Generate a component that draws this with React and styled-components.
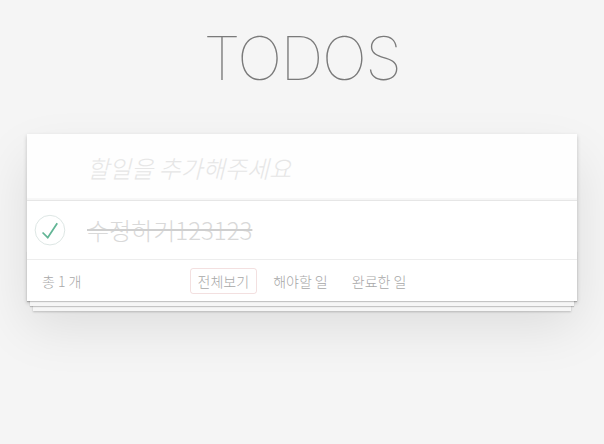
import styled, { createGlobalStyle } from "styled-components";

const GlobalStyle = createGlobalStyle`
  html, body {
    margin: 0;
    padding: 0;
    min-height: 100%;
  }
  body {
    background: #f5f5f5;
    font-family: "Noto Sans CJK KR", "Liberation Sans", sans-serif;
    font-weight: 300;
    color: #4d4d4d;
    -webkit-font-smoothing: antialiased;
  }
`;

const Page = styled.div`
  width: 550px;
  min-height: 444px;
  box-sizing: border-box;
  margin: 0 auto;
  padding-top: 20px;
`;

const Title = styled.h1`
  margin: 0 0 38px;
  text-align: center;
  font-family: "Inter", "Liberation Sans", sans-serif;
  font-weight: 100;
  font-size: 60px;
  line-height: 76px;
  color: #7a7a7a;
  letter-spacing: -1.5px;
`;

const Card = styled.section`
  background: #fff;
  position: relative;
  box-shadow: 0 2px 4px 0 rgba(0, 0, 0, 0.2), 0 25px 50px 0 rgba(0, 0, 0, 0.1);
`;

const NewTodo = styled.input`
  display: block;
  box-sizing: border-box;
  width: 100%;
  height: 66px;
  margin: 0;
  padding: 16px 16px 16px 60px;
  border: none;
  outline: none;
  background: rgba(0, 0, 0, 0.003);
  box-shadow: inset 0 -2px 1px rgba(0, 0, 0, 0.03);
  font-family: "Noto Sans CJK KR", "Liberation Sans", sans-serif;
  font-size: 24px;
  font-weight: 300;
  color: #4d4d4d;

  &::placeholder {
    font-style: italic;
    color: #e6e6e6;
  }
`;

const List = styled.ul`
  margin: 0;
  padding: 0;
  list-style: none;
  border-top: 1px solid #e6e6e6;
`;

const Item = styled.li`
  display: flex;
  align-items: center;
  height: 58px;
  border-bottom: 1px solid #ededed;
`;

const Toggle = styled.span`
  width: 40px;
  height: 40px;
  flex: 0 0 40px;
  display: flex;
`;

const Label = styled.label`
  padding-left: 20px;
  font-size: 24px;
  line-height: 1.2;
  color: ${(p) => (p.$done ? "#d9d9d9" : "#4d4d4d")};
  text-decoration: ${(p) => (p.$done ? "line-through" : "none")};
  text-decoration-color: #cfcfcf;
`;

const Footer = styled.footer`
  position: relative;
  display: grid;
  grid-template-columns: 1fr auto 1fr;
  align-items: center;
  height: 41px;
  padding: 0 15px;
  font-size: 14px;
  color: #a8a8a8;

  &::before {
    content: "";
    position: absolute;
    left: 0;
    right: 0;
    bottom: 0;
    height: 50px;
    pointer-events: none;
    box-shadow: 0 1px 1px rgba(0, 0, 0, 0.2), 0 8px 0 -3px #f6f6f6,
      0 9px 1px -3px rgba(0, 0, 0, 0.2), 0 16px 0 -6px #f6f6f6,
      0 17px 2px -6px rgba(0, 0, 0, 0.2);
  }
`;

const Count = styled.span`
  position: relative;
`;

const Filters = styled.ul`
  position: relative;
  display: flex;
  margin: 0;
  padding: 0;
  list-style: none;
`;

const Filter = styled.li`
  margin: 0 4px;
  padding: 2px 7px;
  border: 1px solid ${(p) => (p.$selected ? "rgba(175, 47, 47, 0.15)" : "transparent")};
  border-radius: 3px;
  color: #a8a8a8;
  cursor: pointer;
`;

const CheckIcon = () => (
  <svg width="40" height="40" viewBox="-10 -18 100 135">
    <circle cx="50" cy="50" r="50" fill="none" stroke="#d9e3e0" strokeWidth="3" />
    <path fill="#62b595" d="M72 25L42 71 27 56l-4 4 20 20 34-52z" />
  </svg>
);

export default function App() {
  return (
    <>
      <GlobalStyle />
      <Page>
        <Title>TODOS</Title>
        <Card>
          <NewTodo placeholder="할일을 추가해주세요" />
          <List>
            <Item>
              <Toggle>
                <CheckIcon />
              </Toggle>
              <Label $done>수정하기123123</Label>
            </Item>
          </List>
          <Footer>
            <Count>총 1 개</Count>
            <Filters>
              <Filter $selected>전체보기</Filter>
              <Filter>해야할 일</Filter>
              <Filter>완료한 일</Filter>
            </Filters>
            <span />
          </Footer>
        </Card>
      </Page>
    </>
  );
}
